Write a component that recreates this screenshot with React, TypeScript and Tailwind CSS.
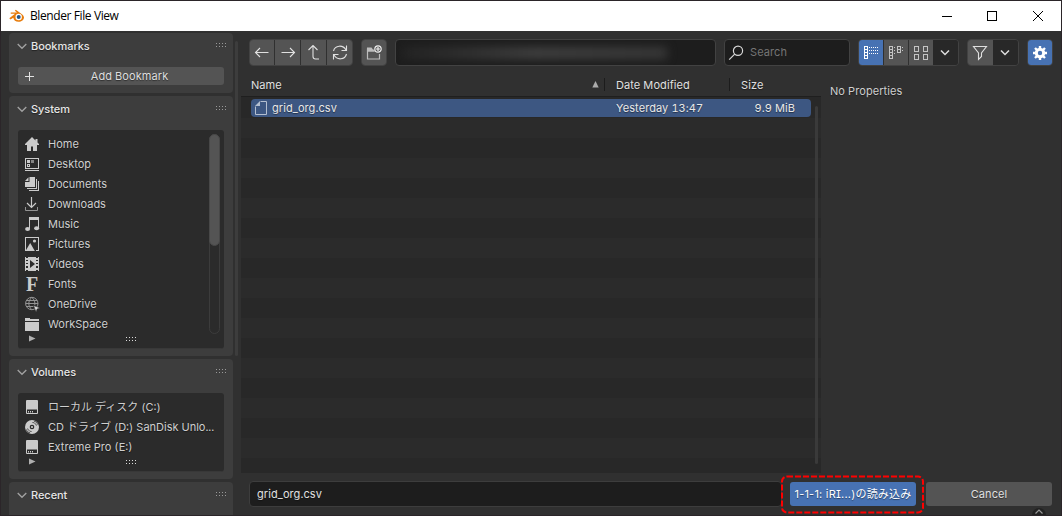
import React from 'react';

const textShadow = '[text-shadow:0_1px_1px_rgba(0,0,0,0.45)]';

const HomeIcon = () => (
  <svg width="16" height="16" viewBox="0 0 16 16" fill="#cbcbcb">
    <path d="M8 1 1 8v1h2v6h4v-4.500h2V15h4V9h2V8l-1.500-1.500V3h-2v1.500z" />
  </svg>
);

const DesktopIcon = () => (
  <svg width="16" height="16" viewBox="0 0 16 16" fill="#cbcbcb" shapeRendering="crispEdges">
    <path d="M1 2h14v11H1zM2 3v9h12V3z" fillRule="evenodd" />
    <path d="M1 14h14v1H1zM3 4h3v3H3zM3 8h3v3H3zM4 9v1h1V9z" fillRule="evenodd" />
    <path d="M7 4h3v3H7z" fill="#858585" />
  </svg>
);

const DocumentsIcon = () => (
  <svg width="16" height="16" viewBox="0 0 16 16" fill="#cbcbcb">
    <path d="M5.500 1H11v10H1V6h4.500zM4.500 1.300V5H1z" />
    <path d="M12 3h1v10H3v-1h9zM14 5h1v10H5v-1h9z" shapeRendering="crispEdges" />
  </svg>
);

const DownloadsIcon = () => (
  <svg width="16" height="16" viewBox="0 0 16 16" fill="none" stroke="#cbcbcb">
    <path d="M7.500 1v10M3 7l4.500 4.500L12 7" strokeWidth="1.200" />
    <path d="M1.500 11v3.500h12V11" stroke="#929292" />
  </svg>
);

const MusicIcon = () => (
  <svg width="16" height="16" viewBox="0 0 16 16" fill="#cbcbcb">
    <path d="M5 1h10v11h-1V4H6v8.500H5z" />
    <ellipse cx="3.600" cy="13" rx="2.500" ry="2" />
    <ellipse cx="12.600" cy="12.300" rx="2.500" ry="2" />
  </svg>
);

const PicturesIcon = () => (
  <svg width="16" height="16" viewBox="0 0 16 16" fill="#cbcbcb">
    <path d="M1 1h14v14h-3v-1h2V2H2v12h1v1H1z" shapeRendering="crispEdges" />
    <path d="m1.500 15 4.700-8 4.600 8z" />
    <circle cx="10.500" cy="5" r="1.600" />
  </svg>
);

const VideosIcon = () => (
  <svg width="16" height="16" viewBox="0 0 16 16" fill="#cbcbcb">
    <path
      d="M1 1h1v1h2V1h8v1h2V1h1v14h-1v-1h-2v1H4v-1H2v1H1zM2 4v1h2V4zM2 7v1h2V7zM2 10v2h2v-2zM12 4v1h2V4zM12 7v1h2V7zM12 10v2h2v-2zM6 4v8l5-4z"
      fillRule="evenodd"
    />
  </svg>
);

const FontsIcon = () => (
  <span className="flex h-5 w-4 items-center justify-center font-['Liberation_Serif',serif] text-[20px]/[20px] font-bold tracking-normal text-[#cbcbcb]">
    F
  </span>
);

const OneDriveIcon = () => (
  <svg width="16" height="16" viewBox="0 0 16 16" fill="none" stroke="#949494">
    <circle cx="7.800" cy="7.500" r="6.200" />
    <path d="M7.800 1.300c-4 4-4 8.500 0 12.400M7.800 1.300c2.600 2.500 3.500 5 3 8M2.500 4.500h10.600M1.600 7.500H14M2.500 10.500h7" />
    <path d="m9.500 9.500 6.500 2.400-2.900 1.100-1 2.900z" fill="#d8d8d8" stroke="#2b2b2b" strokeWidth=".5" />
  </svg>
);

const FolderIcon = () => (
  <svg width="16" height="16" viewBox="0 0 16 16" fill="#cbcbcb" shapeRendering="crispEdges">
    <path d="M1 2h5v1h9v2H1zM1 6h14v9H1z" />
  </svg>
);

const DiskIcon = () => (
  <svg width="16" height="16" viewBox="0 0 16 16" fill="#cbcbcb">
    <rect x="2" y="1" width="12" height="14" rx="1" />
    <path d="M3 10.500h10V14H3z" fill="#2b2b2b" />
    <path d="M4 12h1v1.500H4zM6 12h1v1.500H6zM8 12h1v1.500H8z" />
  </svg>
);

const DiscIcon = () => (
  <svg width="16" height="16" viewBox="0 0 16 16">
    <circle cx="8" cy="8" r="7" fill="#cbcbcb" />
    <circle cx="8" cy="8" r="2.300" fill="#2b2b2b" />
    <circle cx="8" cy="8" r="1.100" fill="#cbcbcb" />
    <path d="M8.500 3.500c2 0 3.700 1.500 4 3.500M10 2c2 .6 3.400 2 4 4M7.500 12.500c-2 0-3.700-1.500-4-3.500M6 14c-2-.6-3.400-2-4-4" fill="none" stroke="#2b2b2b" strokeWidth=".9" strokeDasharray="2 .6" />
  </svg>
);

const BlenderLogo = () => (
  <svg width="16" height="14" viewBox="0 0 16 14">
    <path d="M.3 9.300 6 4.700H1.700V3.500H8L5.800 1.700l1-.9 6.500 4.700A5 5 0 0 1 15 8.200c0 2.700-2.500 4.600-5.500 4.600-2.800 0-4.800-1.600-5.200-4L1.500 10.500z" fill="#e87d0d" />
    <circle cx="9.700" cy="8" r="3.200" fill="#fff" />
    <circle cx="9.700" cy="8" r="2" fill="#265787" />
  </svg>
);

const Grip = ({ color = '#999' }: { color?: string }) => (
  <svg width="11" height="5" viewBox="0 0 11 5" fill={color} shapeRendering="crispEdges">
    {[0, 3, 6, 9].map((x) => (
      <React.Fragment key={x}>
        <rect x={x} y="0" width="1" height="1" />
        <rect x={x} y="3" width="1" height="1" />
      </React.Fragment>
    ))}
  </svg>
);

const systemItems = [
  { label: 'Home', icon: HomeIcon },
  { label: 'Desktop', icon: DesktopIcon },
  { label: 'Documents', icon: DocumentsIcon },
  { label: 'Downloads', icon: DownloadsIcon },
  { label: 'Music', icon: MusicIcon },
  { label: 'Pictures', icon: PicturesIcon },
  { label: 'Videos', icon: VideosIcon },
  { label: 'Fonts', icon: FontsIcon },
  { label: 'OneDrive', icon: OneDriveIcon },
  { label: 'WorkSpace', icon: FolderIcon },
];

const volumeItems = [
  { label: 'ローカル ディスク (C:)', icon: DiskIcon },
  { label: 'CD ドライブ (D:) SanDisk Unlo...', icon: DiscIcon },
  { label: 'Extreme Pro (E:)', icon: DiskIcon },
];

type Item = { label: string; icon: () => React.JSX.Element };

function Panel({ title, className, children }: { title: string; className: string; children?: React.ReactNode }) {
  return (
    <section className={`shrink-0 rounded bg-[#3d3d3d] px-[9px] ${className}`}>
      <div className="flex h-[26px] items-center">
        <svg width="10" height="7" viewBox="0 0 10 7" className="-ml-px mt-px" fill="none" stroke="#a2a2a2" strokeWidth="1.300">
          <path d="m.7 1 4.300 4.300L9.300 1" />
        </svg>
        <span className={`ml-[4px] grow font-medium tracking-[-0.05px] text-[#e6e6e6] ${textShadow}`}>{title}</span>
        <span className="-mr-[3px] -mt-px flex"><Grip /></span>
      </div>
      {children}
    </section>
  );
}

function ItemList({ items, scroll }: { items: Item[]; scroll?: boolean }) {
  return (
    <div className="mt-2 rounded-[3px] border-b border-[#383838] bg-[#2b2b2b] pt-1">
      <div className="flex justify-between pl-[6px] pr-[4px]">
        <ul>
          {items.map(({ label, icon: Icon }) => (
            <li key={label} className="flex h-5 items-center gap-2">
              <Icon />
              <span className={`whitespace-nowrap tracking-normal ${textShadow}`}>{label}</span>
            </li>
          ))}
        </ul>
        {scroll && (
          <div className="w-[11px] rounded-full border border-[#3c3c3c]">
            <div className="-mx-px -mt-px h-[112px] rounded-full border border-[#484848] bg-[#545454]" />
          </div>
        )}
      </div>
      <div className="flex h-[14px] items-start pl-[11px] pt-px">
        <svg width="7" height="7" viewBox="0 0 7 7" fill="#b0b0b0">
          <path d="M0 .5v6l6.500-3z" />
        </svg>
        <span className="ml-[90px] mt-[2px] flex"><Grip color="#dcdcdc" /></span>
      </div>
    </div>
  );
}

const toolButton = 'flex h-[25px] items-center justify-center bg-[#545454]';
const group = 'flex h-[27px] shrink-0 overflow-hidden rounded border border-[#424242]';

function Toolbar() {
  return (
    <div className="flex h-[35px] items-start text-[#e0e0e0]">
      <div className={`${group} w-[104px] gap-px`}>
        <button className={`${toolButton} w-[24px]`}>
          <svg width="16" height="16" viewBox="0 0 16 16" fill="none" stroke="currentColor" strokeWidth="1.100">
            <path d="M14.500 7.500h-13M6 3 1.500 7.500 6 12" />
          </svg>
        </button>
        <button className={`${toolButton} w-[25px]`}>
          <svg width="16" height="16" viewBox="0 0 16 16" fill="none" stroke="currentColor" strokeWidth="1.100">
            <path d="M1.500 7.500h13M10 3l4.500 4.500L10 12" />
          </svg>
        </button>
        <button className={`${toolButton} w-[25px]`}>
          <svg width="16" height="16" viewBox="0 0 16 16" fill="none" stroke="currentColor" strokeWidth="1.100">
            <path d="M2.500 5 7 .5 11.500 5M7 .5v11Q7 14 9.500 14H13" />
          </svg>
        </button>
        <button className={`${toolButton} grow`}>
          <svg width="16" height="16" viewBox="0 0 16 16" fill="none" stroke="currentColor" strokeWidth="1.100">
            <path d="M1.500 6C3 0 11-.5 14 5M14.500.5v5h-5M14.500 9c-1.500 6-9.500 6.500-12.500 1M1.500 14.500v-5h5" />
          </svg>
        </button>
      </div>
      <div className={`${group} ml-[8px] w-[26px]`}>
        <button className={`${toolButton} grow`}>
          <svg width="16" height="16" viewBox="0 0 16 16" fill="none">
            <path d="M1.500 3.500V14h12V9M1.500 6H9" stroke="#bcbcbc" strokeWidth="1.200" />
            <path d="M1 2.500h4.500l1.500 2h1v2H1z" fill="#bcbcbc" />
            <circle cx="12" cy="4" r="3.200" fill="#545454" stroke="#eee" strokeWidth="1.200" />
            <path d="M12 2v4M10 4h4" stroke="#eee" strokeWidth="1.200" />
          </svg>
        </button>
      </div>
      <div className="ml-[8px] flex h-[27px] w-[321px] shrink-0 items-center overflow-hidden rounded border border-[#424242] bg-[#1d1d1d] pl-[6px]">
        <div className="h-[12px] w-[265px] bg-linear-to-r from-[#242424] via-[#404040] to-[#383838] blur-[5px]" />
      </div>
      <div className="ml-[8px] flex h-[27px] w-[126px] shrink-0 items-center rounded border border-[#424242] bg-[#1d1d1d] pl-[3px]">
        <svg width="16" height="16" viewBox="0 0 16 16" fill="none" stroke="#d8d8d8" strokeWidth="1.200">
          <circle cx="10" cy="5.800" r="4.600" />
          <path d="M6.700 9.200 1.200 14.700" />
        </svg>
        <span className="ml-[6px] text-[#757575]">Search</span>
      </div>
      <div className={`${group} ml-[8px] w-[101px]`}>
        <button className="flex w-[24px] items-center justify-center bg-[#4772b3]">
          <svg width="16" height="16" viewBox="0 0 16 16" fill="none" stroke="#fff" shapeRendering="crispEdges">
            <path d="M1.500 1.500h3v12h-3zM1.500 4.500h3M1.500 7.500h3M1.500 10.500h3" />
            <path d="M6 2.500h9M6 5.500h9M6 8.500h9" strokeDasharray="1 1" />
          </svg>
        </button>
        <button className={`${toolButton} ml-px w-[24px]`}>
          <svg width="16" height="16" viewBox="0 0 16 16" fill="none" stroke="#c4c4c4" shapeRendering="crispEdges">
            <path d="M1.500 1.500h3v12h-3zM1.500 4.500h3M1.500 7.500h3M1.500 10.500h3M9.500 1.500h3v6h-3zM9.500 4.500h3" />
            <path d="M6 2.500h2M6 5.500h2M6 8.500h2M14 2.500h2M14 5.500h2" strokeDasharray="1 1" />
          </svg>
        </button>
        <button className={`${toolButton} ml-px w-[24px] pr-px`}>
          <svg width="16" height="16" viewBox="0 0 16 16" fill="none" stroke="#c4c4c4" shapeRendering="crispEdges">
            <path d="M1.500 1.500h4v5h-4zM10.500 1.500h4v5h-4zM1.500 9.500h4v5h-4zM10.500 9.500h4v5h-4z" />
          </svg>
        </button>
        <button className="flex grow items-center justify-center bg-[#282828] pr-px">
          <Chevron />
        </button>
      </div>
      <div className={`${group} ml-[8px] w-[52px]`}>
        <button className={`${toolButton} w-[25px] pr-px`}>
          <svg width="16" height="16" viewBox="0 0 16 16" fill="none" stroke="currentColor" strokeWidth="1.100">
            <path d="M1.500 1.500h13L9.500 8v3.500l-3 3V8z" />
          </svg>
        </button>
        <button className="flex grow items-center justify-center bg-[#282828] pr-px">
          <Chevron />
        </button>
      </div>
      <div className={`${group} ml-[8px] w-[26px]`}>
        <button className="flex grow items-center justify-center bg-[#4772b3]">
          <svg width="16" height="16" viewBox="0 0 16 16" fill="none" stroke="#fff">
            <circle cx="8" cy="8" r="3.700" strokeWidth="3" />
            <path d="M8 1v3M8 12v3M1 8h3M12 8h3M3 3l2 2M11 11l2 2M3 13l2-2M11 5l2-2" strokeWidth="2.400" />
          </svg>
        </button>
      </div>
    </div>
  );
}

const Chevron = () => (
  <svg width="10" height="7" viewBox="0 0 10 7" fill="none" stroke="#dedede" strokeWidth="1.500">
    <path d="m1 1.500 4 4 4-4" />
  </svg>
);

function FileTable() {
  return (
    <div className="flex h-[400px] w-[580px] shrink-0 flex-col bg-[#282828]">
      <div className={`flex h-6 shrink-0 items-center border-b border-[#1f1f1f] bg-[#303030] pl-[10px] pt-px text-[#e0e0e0] ${textShadow}`}>
        <span className="w-[341px]">Name</span>
        <svg width="7" height="7" viewBox="0 0 7 7" className="-mt-px" fill="#ababab">
          <path d="M3.500 0 .3 6.500h6.400z" />
        </svg>
        <div className="-mt-px ml-[5px] h-[13px] w-px bg-[#1c1c1c]" />
        <span className="ml-[11px] w-[113px]">Date Modified</span>
        <div className="-mt-px h-[13px] w-px bg-[#1c1c1c]" />
        <span className="ml-[11px]">Size</span>
      </div>
      <div className="flex grow justify-between bg-[repeating-linear-gradient(to_bottom,#282828_0px,#282828_20px,#2b2b2b_20px,#2b2b2b_40px)] bg-[position:0_1px] pl-[10px] pr-[3px] pt-[2px]">
        <div className={`flex h-[18px] w-[560px] items-center rounded bg-[#3d5782] pl-[3px] pr-[16px] text-[#e8e8e8] ${textShadow}`}>
          <svg width="14" height="16" viewBox="0 0 14 16" fill="none">
            <path d="M6.500 1.500h6v13h-11v-8" stroke="#b4bfd0" />
            <path d="M6 1v5H1z" fill="#b4bfd0" />
          </svg>
          <span className="ml-[4px] w-[344px]">grid_org.csv</span>
          <span className="grow">Yesterday 13:47</span>
          <span>9.9 MiB</span>
        </div>
        <div className="mt-[7px] h-[358px] w-[3px] rounded-full bg-[#3a3a3a]" />
      </div>
    </div>
  );
}

export default function App() {
  return (
    <div className="relative flex h-[516px] w-[1062px] flex-col overflow-hidden border border-[#2b2529] bg-[#303030] font-['Inter','Noto_Sans_CJK_JP',sans-serif] text-[11px] tracking-[0.08px] text-[#cfcfcf] tabular-nums">
      <header className="flex h-[30px] shrink-0 items-center bg-white pl-[8px] pr-[17px] text-black">
        <BlenderLogo />
        <span className="ml-[5px] grow font-['Open_Sans',sans-serif] text-[12px] tracking-[-0.4px]">Blender File View</span>
        <svg width="102" height="12" viewBox="0 0 102 12" fill="none" stroke="#000" className="-mt-px">
          <path d="M0 6.500h10M45.500 1.500h9v9h-9z" shapeRendering="crispEdges" />
          <path d="m91 1 10 10m0-10L91 11" />
        </svg>
      </header>

      <div className="flex min-h-0 grow">
        <aside className="ml-[8px] flex w-[224px] shrink-0 flex-col gap-[3px] overflow-hidden pt-[2px]">
          <Panel title="Bookmarks" className="h-[60px]">
            <button className={`mt-2 flex h-[18px] w-full items-center rounded-[3px] bg-[#545454] pl-[7px] text-[#dedede] ${textShadow}`}>
              <svg width="9" height="9" viewBox="0 0 9 9" stroke="#e2e2e2" shapeRendering="crispEdges">
                <path d="M4.500 0v9M0 4.500h9" />
              </svg>
              <span className="grow pl-[1px] text-center">Add Bookmark</span>
            </button>
          </Panel>
          <Panel title="System" className="h-[260px]">
            <ItemList items={systemItems} scroll />
          </Panel>
          <Panel title="Volumes" className="h-[120px]">
            <ItemList items={volumeItems} />
          </Panel>
          <Panel title="Recent" className="h-[40px]" />
        </aside>
        <div className="ml-[2px] mt-[10px] h-[315px] w-[3px] shrink-0 rounded-full bg-[#3d3d3d]" />

        <main className="ml-[3px] flex grow flex-col">
          <div className="pl-[8px] pt-[8px]">
            <Toolbar />
          </div>
          <div className="-mt-px flex h-[400px] shrink-0">
            <FileTable />
            <div className={`pl-[9px] pt-[10px] ${textShadow}`}>No Properties</div>
          </div>
          <div className="flex h-[43px] items-center pl-[8px]">
            <div className={`flex h-[26px] w-[533px] items-center rounded border border-[#3d3d3d] bg-[#1d1d1d] pl-[7px] text-[#e0e0e0] ${textShadow}`}>
              grid_org.csv
            </div>
            <div className="relative ml-[8px] flex h-[24px] w-[126px] items-center justify-center rounded-[3px] bg-[#4772b3] whitespace-nowrap text-white">
              <span className={`tracking-[0.22px] normal-nums [font-feature-settings:'cv08'] ${textShadow}`}>1-1-1: iRI...)の読み込み</span>
              <svg className="absolute -left-[10px] -top-[7px]" width="145" height="39" viewBox="0 0 145 39" fill="none">
                <rect x="2" y="1.500" width="141" height="36" rx="5" stroke="#f00" strokeWidth="2" strokeDasharray="6 2" />
              </svg>
            </div>
            <button className={`ml-[10px] h-[24px] w-[126px] rounded-[3px] bg-[#545454] text-[#e0e0e0] ${textShadow}`}>Cancel</button>
          </div>
          <div className="absolute left-[1031px] top-[507px] flex h-[7px] w-[14px] items-center justify-center rounded-t-full bg-[#222]">
            <svg width="8" height="5" viewBox="0 0 8 5" fill="none" stroke="#999" strokeWidth="1.200">
              <path d="m.5 4.500 3.500-3.500 3.500 3.500" />
            </svg>
          </div>
        </main>
      </div>
    </div>
  );
}
